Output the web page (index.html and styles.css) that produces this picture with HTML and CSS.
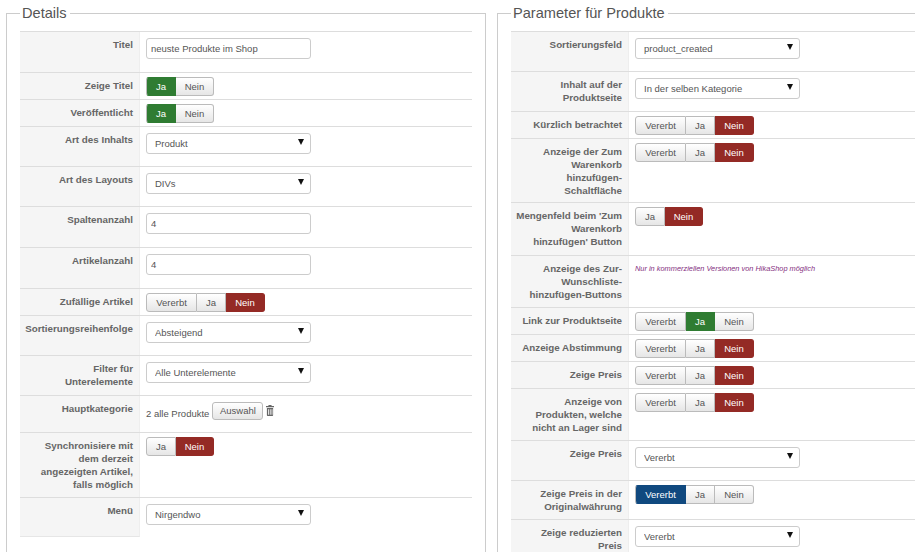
FILE: index.html
```html
<!DOCTYPE html>
<html lang="de">
<head>
<meta charset="utf-8">
<title>Details</title>
<link rel="stylesheet" href="styles.css">
</head>
<body>
<main class="page">
<fieldset class="panel panel-left">
<legend>Details</legend>
<div class="row"><div class="key">Titel</div><div class="val field"><input class="text" type="text" value="neuste Produkte im Shop"></div></div>
<div class="row"><div class="key">Zeige Titel</div><div class="val"><div class="toggle"><span class="green ja">Ja</span><span class="nein">Nein</span></div></div></div>
<div class="row"><div class="key">Veröffentlicht</div><div class="val"><div class="toggle"><span class="green ja">Ja</span><span class="nein">Nein</span></div></div></div>
<div class="row"><div class="key">Art des Inhalts</div><div class="val sel"><div class="select"><select><option>Produkt</option></select></div></div></div>
<div class="row"><div class="key">Art des Layouts</div><div class="val sel"><div class="select"><select><option>DIVs</option></select></div></div></div>
<div class="row"><div class="key">Spaltenanzahl</div><div class="val field"><input class="text" type="text" value="4"></div></div>
<div class="row"><div class="key">Artikelanzahl</div><div class="val field"><input class="text" type="text" value="4"></div></div>
<div class="row"><div class="key">Zufällige Artikel</div><div class="val"><div class="toggle"><span class="ver">Vererbt</span><span class="ja">Ja</span><span class="red nein">Nein</span></div></div></div>
<div class="row"><div class="key">Sortierungsreihenfolge</div><div class="val sel"><div class="select"><select><option>Absteigend</option></select></div></div></div>
<div class="row"><div class="key">Filter für<br>Unterelemente</div><div class="val sel"><div class="select"><select><option>Alle Unterelemente</option></select></div></div></div>
<div class="row"><div class="key">Hauptkategorie</div><div class="val cat"><span class="cat-name">2 alle Produkte</span><button class="pick" type="button">Auswahl</button><svg class="trash" width="8" height="11" viewBox="0 0 9 11" preserveAspectRatio="none" aria-hidden="true"><path fill="#666" d="M3 0h3l.5 1H9v1.200H0V1h2.500zM1 3h7v7.200q0 .8-.8.8H1.800q-.8 0-.8-.8zm1.300 1.200v5.600h.9V4.200zm2 0v5.600h.9V4.200zm2 0v5.600h.9V4.200z"/></svg></div></div>
<div class="row"><div class="key">Synchronisiere mit<br>dem derzeit<br>angezeigten Artikel,<br>falls möglich</div><div class="val"><div class="toggle"><span class="ja">Ja</span><span class="red nein">Nein</span></div></div></div>
<div class="row row-last"><div class="key">Menü</div><div class="val sel"><div class="select"><select><option>Nirgendwo</option></select></div></div></div>
</fieldset>
<fieldset class="panel panel-right">
<legend>Parameter für Produkte</legend>
<div class="row"><div class="key">Sortierungsfeld</div><div class="val sel"><div class="select"><select><option>product_created</option></select></div></div></div>
<div class="row"><div class="key">Inhalt auf der<br>Produktseite</div><div class="val sel"><div class="select"><select><option>In der selben Kategorie</option></select></div></div></div>
<div class="row"><div class="key">Kürzlich betrachtet</div><div class="val"><div class="toggle"><span class="ver">Vererbt</span><span class="ja">Ja</span><span class="red nein">Nein</span></div></div></div>
<div class="row row-short"><div class="key">Anzeige der Zum<br>Warenkorb<br>hinzufügen-<br>Schaltfläche</div><div class="val"><div class="toggle"><span class="ver">Vererbt</span><span class="ja">Ja</span><span class="red nein">Nein</span></div></div></div>
<div class="row row-plus"><div class="key">Mengenfeld beim 'Zum<br>Warenkorb<br>hinzufügen' Button</div><div class="val"><div class="toggle"><span class="ja">Ja</span><span class="red nein">Nein</span></div></div></div>
<div class="row"><div class="key">Anzeige des Zur-<br>Wunschliste-<br>hinzufügen-Buttons</div><div class="val note"><em>Nur in kommerziellen Versionen von HikaShop möglich</em></div></div>
<div class="row"><div class="key">Link zur Produktseite</div><div class="val"><div class="toggle"><span class="ver">Vererbt</span><span class="green ja">Ja</span><span class="nein">Nein</span></div></div></div>
<div class="row"><div class="key">Anzeige Abstimmung</div><div class="val"><div class="toggle"><span class="ver">Vererbt</span><span class="ja">Ja</span><span class="red nein">Nein</span></div></div></div>
<div class="row"><div class="key">Zeige Preis</div><div class="val"><div class="toggle"><span class="ver">Vererbt</span><span class="ja">Ja</span><span class="red nein">Nein</span></div></div></div>
<div class="row"><div class="key">Anzeige von<br>Produkten, welche<br>nicht an Lager sind</div><div class="val"><div class="toggle"><span class="ver">Vererbt</span><span class="ja">Ja</span><span class="red nein">Nein</span></div></div></div>
<div class="row"><div class="key">Zeige Preis</div><div class="val sel"><div class="select"><select><option>Vererbt</option></select></div></div></div>
<div class="row"><div class="key">Zeige Preis in der<br>Originalwährung</div><div class="val sel"><div class="toggle"><span class="blue ver">Vererbt</span><span class="ja">Ja</span><span class="nein">Nein</span></div></div></div>
<div class="row row-end"><div class="key">Zeige reduzierten<br>Preis</div><div class="val sel"><div class="select"><select><option>Vererbt</option></select></div></div></div>
</fieldset>
</main>
</body>
</html>
```
FILE: styles.css
```css
html, body {
  margin: 0;
  height: 552px;
  overflow: hidden;
  background: #fff;
}
body {
  font-family: "Liberation Sans", Arial, sans-serif;
  color: #555;
}
.page {
  display: flex;
  gap: 11px;
  box-sizing: border-box;
  height: 552px;
  padding: 4px 0 0 6px;
  overflow: hidden;
}
.panel {
  margin: 0;
  min-width: 0;
  flex: none;
  box-sizing: border-box;
  height: 548px;
  padding: 8px 13px 0;
  border: 1px solid #ccc;
  border-bottom: 0;
  overflow: hidden;
}
.panel-left {
  width: 480px;
}
.panel-right {
  width: 418px;
  padding-right: 0;
  border-right: 0;
}
legend {
  font-size: 14.6px;
  line-height: 19px;
  color: #555;
  padding: 0 3px 0 2px;
}
.row {
  display: flex;
  border-top: 1px solid #ddd;
}
.row-last .key {
  border-bottom: 1px solid #e6e6e6;
}
.key {
  flex: none;
  box-sizing: border-box;
  width: 120px;
  padding: 6px 6px 6px 0;
  background: #f5f5f5;
  border-right: 1px solid #eee;
  font-size: 9.8px;
  line-height: 13px;
  font-weight: 700;
  white-space: nowrap;
  text-align: right;
  color: #666;
}
.panel-right .key {
  width: 118px;
}
.row-short .key {
  padding-bottom: 5px;
}
.row-plus .key {
  padding-bottom: 7px;
}
.val {
  flex: 1;
  min-width: 0;
  padding: 4px 6px 3px;
  font-size: 9.5px;
}
.sel {
  padding-top: 6px;
  padding-bottom: 12px;
}
.field {
  padding-top: 6px;
  padding-bottom: 13px;
}
.sel .toggle {
  margin-top: -2px;
}
.text,
.select select {
  display: block;
  box-sizing: border-box;
  width: 165px;
  height: 21px;
  margin: 0;
  background: #fff;
  border: 1px solid #ccc;
  border-radius: 3px;
  color: #555;
  font: 9.5px/19px "Liberation Sans", Arial, sans-serif;
}
.text {
  padding: 0 4px;
}
.select {
  position: relative;
  width: 165px;
}
.select select {
  appearance: none;
  -webkit-appearance: none;
  padding: 0 8px;
}
.select::after {
  content: "";
  position: absolute;
  right: 7px;
  top: 6px;
  border-left: 3px solid transparent;
  border-right: 3px solid transparent;
  border-top: 6px solid #111;
}
.toggle {
  display: inline-flex;
  height: 19px;
  font-size: 9.5px;
  color: #555;
}
.toggle span {
  display: block;
  box-sizing: border-box;
  height: 19px;
  line-height: 17px;
  text-align: center;
  border: 1px solid #bbb;
  border-left: 0;
  background: linear-gradient(#fff, #e6e6e6);
}
.toggle span:first-child {
  border-left: 1px solid #bbb;
  border-radius: 3px 0 0 3px;
}
.toggle span:last-child {
  border-radius: 0 3px 3px 0;
}
.ver {
  width: 51px;
}
.ja {
  width: 29px;
}
.toggle .ja:first-child {
  width: 30px;
}
.nein {
  width: 38px;
}
.ver + .ja + .nein {
  width: 39px;
}
.toggle .green {
  background: #2f7c32;
  border-color: #2f7c32;
  color: #fff;
}
.toggle .red {
  background: #942a25;
  border-color: #942a25;
  color: #fff;
}
.toggle .blue {
  background: #10497f;
  border-color: #10497f;
  color: #fff;
}
.cat {
  display: flex;
  align-items: flex-start;
  padding-top: 6px;
  padding-bottom: 12px;
}
.cat-name {
  margin-top: 5px;
  line-height: 13px;
}
.pick {
  box-sizing: border-box;
  width: 51px;
  height: 18px;
  margin: 0 0 0 3px;
  padding: 0;
  border: 1px solid #bbb;
  border-radius: 3px;
  background: linear-gradient(#fff, #e6e6e6);
  color: #555;
  font: 9.5px/14px "Liberation Sans", Arial, sans-serif;
}
.trash {
  margin: 3px 0 0 3px;
}
.note {
  padding-top: 8px;
  font-size: 7.4px;
  line-height: 10px;
  color: #85307f;
}
```
